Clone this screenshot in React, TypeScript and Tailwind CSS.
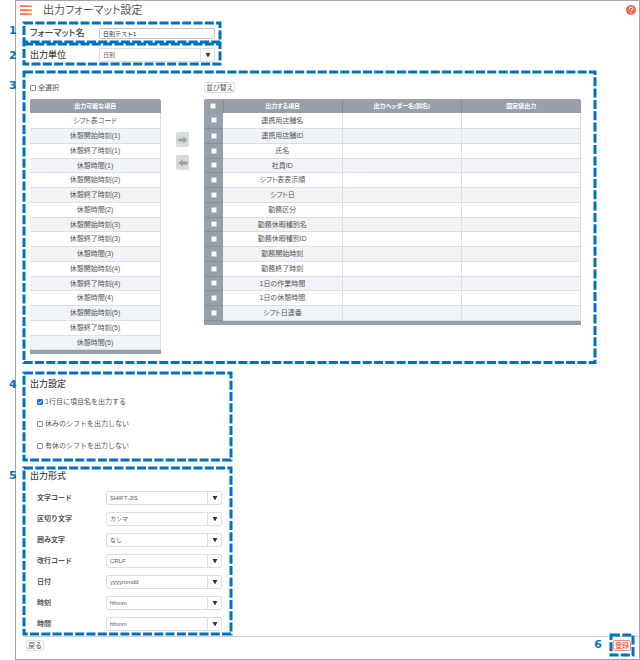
import { useState, type ReactNode } from "react"

const AVAILABLE_ITEMS = [
  "シフト表コード",
  ...[1, 2, 3, 4, 5].flatMap((n) => [`休憩開始時刻(${n})`, `休憩終了時刻(${n})`, `休憩時間(${n})`]),
]

const OUTPUT_ITEMS = [
  "連携用店舗名",
  "連携用店舗ID",
  "氏名",
  "社員ID",
  "シフト表表示順",
  "シフト日",
  "勤務区分",
  "勤務休暇種別名",
  "勤務休暇種別ID",
  "勤務開始時刻",
  "勤務終了時刻",
  "1日の作業時間",
  "1日の休憩時間",
  "シフト日連番",
]

const OUTPUT_OPTIONS = [
  { id: "header-row", label: "1行目に項目名を出力する", checked: true },
  { id: "skip-off", label: "休みのシフトを出力しない", checked: false },
  { id: "skip-paid", label: "有休のシフトを出力しない", checked: false },
]

const FORMAT_FIELDS = [
  { id: "charset", label: "文字コード", options: ["SHIFT-JIS", "UTF-8"] },
  { id: "delimiter", label: "区切り文字", options: ["カンマ", "タブ"] },
  { id: "quote", label: "囲み文字", options: ["なし", "ダブルクォート"] },
  { id: "newline", label: "改行コード", options: ["CRLF", "LF"] },
  { id: "date", label: "日付", options: ["yyyymmdd", "yyyy/mm/dd"] },
  { id: "clock", label: "時刻", options: ["hhmm", "hh:mm"] },
  { id: "duration", label: "時間", options: ["hhmm", "hh:mm"] },
]

// Dashed marker around a part of the screen, sized by its parent
function DashedOutline() {
  return (
    <svg className="pointer-events-none absolute top-[1px] left-[1px] h-[calc(100%-3px)] w-[calc(100%-3px)] overflow-visible" aria-hidden="true">
      <rect width="100%" height="100%" fill="none" stroke="#0070c0" strokeWidth="3" strokeDasharray="9 2.3" />
    </svg>
  )
}

interface CalloutProps {
  number: number
  className: string
  numberClassName: string
  children: ReactNode
}

function Callout({ number, className, numberClassName, children }: CalloutProps) {
  return (
    <section className={`relative ${className}`}>
      <DashedOutline />
      <span className={`absolute -left-[14px] font-['DejaVu_Sans'] text-[11px] leading-[18px] font-bold text-[#0070c0] ${numberClassName}`}>
        {number}
      </span>
      {children}
    </section>
  )
}

function Select({ id, options }: { id: string; options: string[] }) {
  return (
    <div className="relative h-[14px] w-[116px] rounded-[2px] border border-[#dedede] bg-white">
      <select id={id} className="block h-full w-full appearance-none bg-transparent pl-[3px] text-[6px] leading-[12px] text-[#555] outline-none">
        {options.map((option) => (
          <option key={option}>{option}</option>
        ))}
      </select>
      <span className="pointer-events-none absolute inset-y-0 right-0 flex w-[14px] items-center justify-center border-l border-[#dedede]">
        <svg viewBox="0 0 6 4" className="h-[4px] w-[6px]" aria-hidden="true">
          <path d="M0.6 0H5.4L3.3 4H2.7Z" fill="#333" />
        </svg>
      </span>
    </div>
  )
}

interface CheckBoxProps {
  id?: string
  label?: string
  checked: boolean
  onChange: () => void
  plain?: boolean
}

function CheckBox({ id, label, checked, onChange, plain }: CheckBoxProps) {
  return (
    <span className="relative block size-[6px] shrink-0">
      <input
        id={id}
        type="checkbox"
        aria-label={label}
        checked={checked}
        onChange={onChange}
        className={`block size-[6px] appearance-none rounded-[1px] bg-white checked:bg-[#1374e8] ${plain ? "border border-[#c4c9cf]" : "border border-[#8a8a8a] checked:border-[#1374e8]"}`}
      />
      {checked && (
        <svg viewBox="0 0 6 6" className="pointer-events-none absolute inset-0 size-[6px]" aria-hidden="true">
          <path d="M1.2 3.1L2.5 4.4L4.9 1.6" fill="none" stroke="#fff" strokeWidth="1" />
        </svg>
      )}
    </span>
  )
}

function MoveButton({ label, back }: { label: string; back?: boolean }) {
  return (
    <button type="button" aria-label={label} className="flex h-[15px] w-[13px] items-center justify-center rounded-[2px] bg-[#d6dbe0]">
      <svg viewBox="0 0 10 8" className={`h-[8px] w-[10px] ${back ? "rotate-180" : ""}`} aria-hidden="true">
        <path d="M0.5 2.6H5.4V0.4L9.5 4L5.4 7.6V5.4H0.5Z" fill="#97a0aa" />
      </svg>
    </button>
  )
}

export default function App() {
  const [formatName, setFormatName] = useState("日別テスト1")
  const [allSelected, setAllSelected] = useState(false)
  const [selected, setSelected] = useState<string[]>([])
  const [options, setOptions] = useState(OUTPUT_OPTIONS)

  const toggleItem = (item: string) => {
    setSelected((prev) => (prev.includes(item) ? prev.filter((i) => i !== item) : [...prev, item]))
  }

  const allOutputSelected = selected.length === OUTPUT_ITEMS.length

  const toggleOption = (id: string) => {
    setOptions((prev) => prev.map((o) => (o.id === id ? { ...o, checked: !o.checked } : o)))
  }

  return (
    <div className="min-h-screen bg-white pl-[15px] font-['Liberation_Sans','Noto_Sans_CJK_JP',sans-serif] text-[7px] leading-[14px] text-[#555]">
      <div className="flex min-h-screen flex-col border border-[#a6a6a6] pl-[7px]">
        {/* Title bar */}
        <header className="flex h-[21px] items-center pr-[3px] pb-[3px]">
          <button type="button" aria-label="メニュー" className="-ml-[3px]">
            <svg viewBox="0 0 12 10" className="h-[10px] w-[12px]" aria-hidden="true">
              <defs>
                <linearGradient id="menu-fill" x1="0" x2="12" y1="0" y2="0" gradientUnits="userSpaceOnUse">
                  <stop stopColor="#fb5f45" />
                  <stop offset="1" stopColor="#f9a04a" />
                </linearGradient>
              </defs>
              <path d="M0 0.2h12v1.7H0zM0 4.2h12v1.7H0zM0 8.2h12v1.7H0z" fill="url(#menu-fill)" />
            </svg>
          </button>
          <h1 className="ml-[11px] text-[11px] leading-[16px] text-[#555] [font-feature-settings:'palt']">出力フォーマット設定</h1>
          <button type="button" aria-label="ヘルプ" className="ml-auto">
            <svg viewBox="0 0 10 10" className="size-[10px]" aria-hidden="true">
              <circle cx="5" cy="5" r="5" fill="#fc6146" />
              <path d="M3.3 3.9C3.3 1.7 6.7 1.7 6.7 3.8C6.7 4.9 5 4.9 5 6.2" fill="none" stroke="#fff" strokeWidth="1.1" />
              <circle cx="5" cy="7.8" r="0.7" fill="#fff" />
            </svg>
          </button>
        </header>

        <main>
          <Callout number={1} className="flex h-[22px] w-[199px] items-center pl-[7px]" numberClassName="top-0">
            <label htmlFor="format-name" className="w-[69px] text-[9px] font-medium text-[#444] [font-feature-settings:'palt']">
              フォーマット名
            </label>
            <input
              id="format-name"
              value={formatName}
              onChange={(e) => setFormatName(e.target.value)}
              className="h-[11px] w-[116px] rounded-[2px] border border-[#c4c4c4] pl-[3px] text-[6px] leading-[9px] text-[#222] outline-none"
            />
          </Callout>

          <Callout number={2} className="-mt-px flex h-[23px] w-[199px] items-center pl-[7px]" numberClassName="top-1">
            <label htmlFor="output-unit" className="w-[69px] text-[9px] font-medium text-[#444]">
              出力単位
            </label>
            <Select id="output-unit" options={["日別", "月別"]} />
          </Callout>

          {/* Item tables */}
          <Callout
            number={3}
            className="mt-[5px] mr-[42px] flex items-start pt-[11px] pr-[16px] pb-[11px] pl-[7px] [font-feature-settings:'palt']"
            numberClassName="top-1.5"
          >
            <div className="w-[131px] shrink-0">
              <div className="flex h-[17px] items-start">
                <label className="flex h-[11px] items-center gap-[2px]">
                  <CheckBox checked={allSelected} onChange={() => setAllSelected(!allSelected)} />
                  全選択
                </label>
              </div>
              <div className="overflow-hidden rounded-t-[2px] border-b-4 border-[#97a0aa]">
                <table className="w-full table-fixed border-collapse text-center">
                  <thead>
                    <tr className="h-[14px] bg-[#97a0aa] text-[6px] text-white">
                      <th className="p-0 font-bold">出力可能な項目</th>
                    </tr>
                  </thead>
                  <tbody>
                    {AVAILABLE_ITEMS.map((item) => (
                      <tr key={item} className="h-[15px] leading-[13px] even:bg-[#f0f4f8] nth-[4n]:h-[14px]">
                        <td className="border-r border-b border-[#dcdee0] p-0">{item}</td>
                      </tr>
                    ))}
                  </tbody>
                </table>
              </div>
            </div>

            <div className="mx-[15px] mt-[50px] flex flex-col gap-2">
              <MoveButton label="追加" />
              <MoveButton label="戻す" back />
            </div>

            <div className="min-w-0 grow">
              <div className="flex h-[17px] items-start">
                <button type="button" className="h-[11px] rounded-[2px] border border-[#dedede] px-[1px] leading-[9px]">
                  並び替え
                </button>
              </div>
              <div className="overflow-hidden rounded-t-[2px] border-b-4 border-[#97a0aa]">
                <table className="w-full table-fixed border-collapse text-center">
                  <thead>
                    <tr className="h-[14px] bg-[#97a0aa] text-[6px] text-white">
                      <th className="w-[19px] border-r border-[#87909a] p-0">
                        <div className="flex justify-center">
                          <CheckBox
                            plain
                            label="すべての出力項目"
                            checked={allOutputSelected}
                            onChange={() => setSelected(allOutputSelected ? [] : OUTPUT_ITEMS)}
                          />
                        </div>
                      </th>
                      <th className="border-r border-[#87909a] p-0 font-bold">出力する項目</th>
                      <th className="border-r border-[#87909a] p-0 font-bold">出力ヘッダー名(別名)</th>
                      <th className="p-0 font-bold">固定値出力</th>
                    </tr>
                  </thead>
                  <tbody>
                    {OUTPUT_ITEMS.map((item) => (
                      <tr key={item} className="h-[15px] leading-[13px] even:bg-[#f0f4f8] nth-[4n]:h-[14px]">
                        <td className="border-b border-[#87909a] bg-[#97a0aa] p-0">
                          <div className="flex justify-center">
                            <CheckBox plain label={item} checked={selected.includes(item)} onChange={() => toggleItem(item)} />
                          </div>
                        </td>
                        <td className="border-r border-b border-[#dcdee0] p-0">{item}</td>
                        <td className="border-r border-b border-[#dcdee0] p-0" />
                        <td className="border-r border-b border-[#dcdee0] p-0" />
                      </tr>
                    ))}
                  </tbody>
                </table>
              </div>
            </div>
          </Callout>

          <Callout number={4} className="mt-[7px] w-[210px] px-[7px] pt-[5px] pb-[9px]" numberClassName="top-1">
            <h2 className="text-[9px] font-medium text-[#444]">出力設定</h2>
            <div className="mt-[4px] flex flex-col gap-2 pl-[7px]">
              {options.map((option) => (
                <div key={option.id} className="flex items-center gap-[2px]">
                  <CheckBox id={option.id} checked={option.checked} onChange={() => toggleOption(option.id)} />
                  <label htmlFor={option.id}>{option.label}</label>
                </div>
              ))}
            </div>
          </Callout>

          <Callout number={5} className="mt-[5px] w-[210px] pt-[2px] pb-[5px] pl-[7px]" numberClassName="top-0">
            <h2 className="text-[9px] font-medium text-[#444]">出力形式</h2>
            <div className="mt-[8px] flex flex-col gap-[7px] pl-[7px]">
              {FORMAT_FIELDS.map((field) => (
                <div key={field.id} className="flex items-center">
                  <label htmlFor={field.id} className="w-[69px] font-bold text-[#555]">
                    {field.label}
                  </label>
                  <Select id={field.id} options={field.options} />
                </div>
              ))}
            </div>
          </Callout>
        </main>

        <footer className="mt-auto flex h-[23px] items-start justify-between border-t border-[#d0d0d0] pt-[3px] pr-[8px] pl-[3px]">
          <button type="button" className="h-[11px] rounded-[2px] border border-[#dedede] px-[1px] leading-[9px]">
            戻る
          </button>
          <div className="relative">
            <button type="button" className="block h-[11px] rounded-[2px] border border-[#fb8a6c] px-[1px] leading-[9px] font-bold text-[#fc6a50]">
              登録
            </button>
            <span className="absolute -top-[6px] -right-[4px] h-[23px] w-[25px]">
              <DashedOutline />
            </span>
            <span className="absolute -top-[4px] right-[29px] font-['DejaVu_Sans'] text-[11px] leading-[18px] font-bold text-[#0070c0]">6</span>
          </div>
        </footer>
      </div>
    </div>
  )
}
